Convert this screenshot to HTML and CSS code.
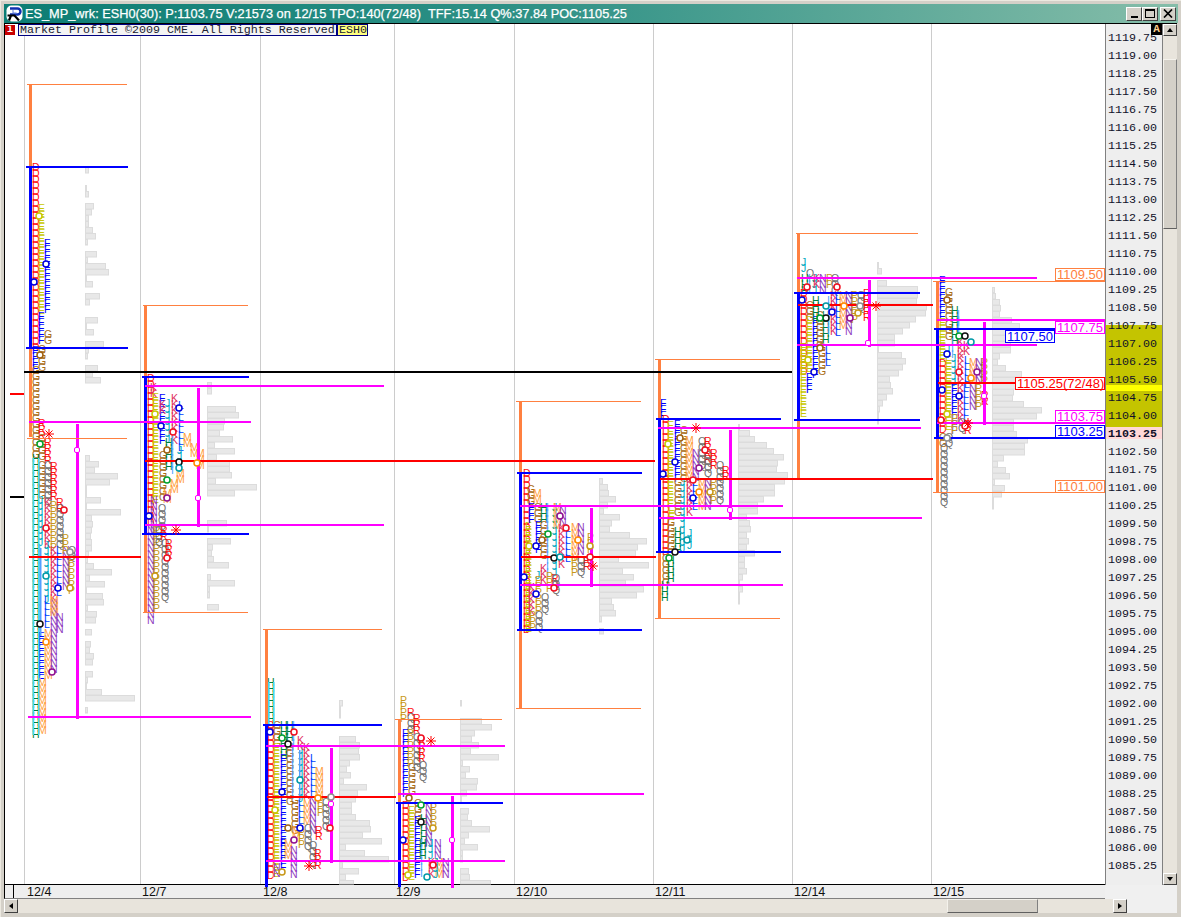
FILE: index.html
```html
<!DOCTYPE html>
<html lang="en">
<head>
<meta charset="utf-8">
<title>ES_MP_wrk</title>
<link rel="stylesheet" href="styles.css">
</head>
<body>
<div class="window">
  <header class="titlebar">
    <svg class="logo" viewBox="0 0 17 17" aria-hidden="true">
      <rect x="0.5" y="0.5" width="16" height="16" rx="5" fill="#fff"/>
      <path d="M4 3.5h7.5a3 3 0 0 1 0 6H4" fill="none" stroke="#1030b0" stroke-width="2.4"/>
      <path d="M7 5v3h3.6" fill="none" stroke="#6080e0" stroke-width="1"/>
      <path d="M1.5 10.5h7l4.500 5M5 10.500l-2 5" fill="none" stroke="#000" stroke-width="2.200"/>
    </svg>
    <span class="title">ES_MP_wrk: ESH0(30): P:1103.75 V:21573 on 12/15 TPO:140(72/48) &nbsp;TFF:15.14 Q%:37.84 POC:1105.25</span>
    <div class="controls">
      <button class="ctl ctl-min" aria-label="Minimize"><span class="min-bar"></span></button>
      <button class="ctl ctl-max" aria-label="Maximize"><span class="max-box"></span></button>
      <button class="ctl ctl-close" aria-label="Close">
        <svg viewBox="0 0 10 9" class="x-glyph" aria-hidden="true"><path d="M1 0.500l8 8M9 0.500l-8 8" stroke="#000" stroke-width="1.700" fill="none"/></svg>
      </button>
    </div>
  </header>

  <main class="client">
    <section class="plot">
      <svg id="chart" class="chart" viewBox="5 24 1100 860" width="1100" height="860"></svg>
      <div class="infobar">
        <span class="info-i">i</span>
        <span class="info-text">Market Profile ©2009 CME. All Rights Reserved</span>
        <span class="info-sym">ESH0</span>
      </div>
    </section>

    <aside class="axis">
      <span class="band band-va"></span>
      <span class="band band-last"></span>
      <span class="band band-cur"></span>
      <span class="axis-a">A</span>
      <ol class="prices">
        <li>1119.75</li><li>1119.00</li><li>1118.25</li><li>1117.50</li><li>1116.75</li><li>1116.00</li>
        <li>1115.25</li><li>1114.50</li><li>1113.75</li><li>1113.00</li><li>1112.25</li><li>1111.50</li>
        <li>1110.75</li><li>1110.00</li><li>1109.25</li><li>1108.50</li><li>1107.75</li><li>1107.00</li>
        <li>1106.25</li><li>1105.50</li><li>1104.75</li><li>1104.00</li><li class="cur">1103.25</li><li>1102.50</li>
        <li>1101.75</li><li>1101.00</li><li>1100.25</li><li>1099.50</li><li>1098.75</li><li>1098.00</li>
        <li>1097.25</li><li>1096.50</li><li>1095.75</li><li>1095.00</li><li>1094.25</li><li>1093.50</li>
        <li>1092.75</li><li>1092.00</li><li>1091.25</li><li>1090.50</li><li>1089.75</li><li>1089.00</li>
        <li>1088.25</li><li>1087.50</li><li>1086.75</li><li>1086.00</li><li>1085.25</li>
      </ol>
    </aside>

    <div class="vscroll">
      <span class="sbtn arrow-up"></span>
      <span class="vgap-top"></span>
      <span class="thumb thumb-v"></span>
      <span class="vgap-bottom"></span>
      <span class="sbtn arrow-down"></span>
    </div>

    <nav class="time-axis">
      <span class="tick"></span>
      <span>12/4</span><span>12/7</span><span>12/8</span><span>12/9</span>
      <span>12/10</span><span>12/11</span><span>12/14</span><span>12/15</span>
    </nav>

    <div class="hscroll">
      <span class="sbtn arrow-left"></span>
      <span class="hgap-left"></span>
      <span class="thumb thumb-h"></span>
      <span class="hgap-right"></span>
      <span class="sbtn arrow-right"></span>
    </div>
  </main>
</div>
<script src="chart.js"></script>
</body>
</html>
```
FILE: styles.css
```css
* { box-sizing: border-box; }
html, body { margin: 0; padding: 0; background: #d4d0c8; }
.window {
  width: 1181px;
  height: 917px;
  background: #d4d0c8;
  padding-top: 3px;
  overflow: hidden;
  border-top: 1px solid #ece9e0;
  border-left: 1px solid #ece9e0;
}
.titlebar {
  height: 19px;
  margin: 0 3px;
  display: flex;
  align-items: center;
  background: linear-gradient(90deg, #0c7d74 0%, #2f9186 45%, #85bda9 100%);
  color: #fff;
  font: 12.75px/18px "Liberation Sans", Arial, sans-serif;
  -webkit-text-stroke: 0.25px #fff;
  white-space: pre;
}
.logo { width: 17px; height: 17px; margin: 0 2px 0 2px; flex: none; }
.title { flex: 1; overflow: hidden; }
.controls { display: flex; align-items: center; margin-right: 2px; }
.ctl {
  width: 16px; height: 14px; padding: 0;
  background: #d4d0c8;
  border: 1px solid;
  border-color: #fff #404040 #404040 #fff;
  display: flex; align-items: center; justify-content: center;
  position: relative;
}
.ctl-close { margin-left: 2px; }
.min-bar { width: 7px; height: 2px; background: #000; margin-top: 6px; }
.max-box { width: 10px; height: 9px; border: 1px solid #000; border-top-width: 2px; }
.x-glyph { width: 10px; height: 9px; }

.client {
  margin: 0;
  border-top: 1px solid #000;
  margin-left: 3px;
  display: grid;
  grid-template-columns: 1101px 22px 36px 14px;
  grid-template-rows: 861px 14px 14px;
  width: 1173px;
  background: #f0f0f0;
}
.plot {
  grid-column: 1; grid-row: 1;
  position: relative;
  background: #fff;
  border-left: 1px solid #000;
  border-bottom: 1px solid #000;
}
.chart { display: block; overflow: visible; position: relative; z-index: 2; }
.chart .tpo { font: 10.5px "Liberation Sans", Arial, sans-serif; }
.chart .lbl { font: 13px "Liberation Sans", Arial, sans-serif; }

.infobar {
  position: absolute; left: 0; top: 0; z-index: 3;
  display: flex; align-items: flex-start;
  font: 11.67px/11px "Liberation Mono", "Courier New", monospace;
  color: #202030;
}
.info-i {
  width: 10px; height: 10px; margin: 1px 3px 0 0;
  background: #c80000; color: #fff; text-align: center; font-weight: bold; font-size: 10px; line-height: 10px;
}
.info-text, .info-sym { height: 12px; border: 1px solid #000080; padding: 0 1px; line-height: 11px; white-space: pre; }
.info-text { background: #f4f4f4; width: 319px; }
.info-sym { background: #ffff80; width: 31px; }

.axis {
  grid-column: 2 / 4; grid-row: 1;
  position: relative;
  background: #eeeeee;
  border-left: 1px solid #808080;
  border-right: 1px solid #808080;
  overflow: hidden;
}
.band { position: absolute; left: 0; right: 0; }
.band-va { top: 301px; height: 102px; background: #c4c400; }
.band-last { top: 361px; height: 6px; background: #ffff00; }
.band-cur { top: 403px; height: 12px; background: #ffd8d8; }
.axis-a {
  position: absolute; right: 0; top: 0; width: 11px; height: 11px; z-index: 2;
  background: #000; color: #ffd090;
  font: bold 11px/11px "Liberation Mono", monospace; text-align: center;
}
.prices {
  position: relative; z-index: 1;
  list-style: none; margin: 0; padding: 5px 0 0 2px;
  font: 11.67px/18px "Liberation Mono", "Courier New", monospace;
  color: #101028;
}
.prices .cur { font-weight: bold; }

.vscroll {
  grid-column: 4; grid-row: 1;
  display: flex; flex-direction: column;
  background: #e8e4dc;
}
.vgap-top { height: 23px; flex: none; }
.vgap-bottom { flex: 1; }
.thumb { flex: none; background: #d4d0c8; border: 1px solid; border-color: #f4f2ec #808080 #606060 #f4f2ec; }
.thumb-v { height: 170px; }
.thumb-h { width: 91px; }
.sbtn {
  flex: none; width: 14px; height: 12px;
  background: #d4d0c8;
  border: 1px solid; border-color: #fff #404040 #404040 #fff;
  display: flex; align-items: center; justify-content: center;
}
.sbtn::after { content: ""; width: 0; height: 0; border: 3px solid transparent; }
.arrow-up::after { border-bottom: 4px solid #000; border-top: 0; }
.arrow-down::after { border-top: 4px solid #000; border-bottom: 0; }
.arrow-left::after { border-right: 4px solid #000; border-left: 0; }
.arrow-right::after { border-left: 4px solid #000; border-right: 0; }

.time-axis {
  grid-column: 1; grid-row: 2;
  display: flex;
  background: #eeeeee;
  border-left: 1px solid #000;
  border-bottom: 1px solid #808080;
  padding-left: 8px;
  font: 12.5px/14px "Liberation Sans", Arial, sans-serif;
  color: #101010;
}
.time-axis .tick { width: 14px; border-left: 1px solid #000; flex: none; }
.time-axis span:nth-child(2) { width: 115px; }
.time-axis span:nth-child(3) { width: 121px; }
.time-axis span:nth-child(4) { width: 133px; }
.time-axis span:nth-child(5) { width: 120px; }
.time-axis span:nth-child(6) { width: 139px; }
.time-axis span:nth-child(7) { width: 139px; }
.time-axis span:nth-child(8) { width: 139px; }

.hscroll {
  grid-column: 1 / 3; grid-row: 3;
  display: flex;
  background: #e8e4dc;
}
.hscroll .sbtn { height: 14px; }
.hgap-left { width: 929px; flex: none; }
.hgap-right { flex: 1; }
```
FILE: chart.js
```js
(function () {
  var NS = "http://www.w3.org/2000/svg";
  var svg = document.getElementById("chart");
  function el(tag, attrs, text) {
    var e = document.createElementNS(NS, tag);
    for (var k in attrs) e.setAttribute(k, attrs[k]);
    if (text) e.textContent = text;
    svg.appendChild(e);
    return e;
  }
  var ORANGE = "#ff8040", BLUE = "#0000ff", MAG = "#ff00ff", RED = "#ff0000";
  var COLORS = {
    D: "#ff1010", E: "#c8c800", F: "#0000ff", G: "#a86c18", H: "#008040",
    I: "#50a0ff", J: "#00a8c0", K: "#e03060", L: "#0040ff", M: "#ffa040",
    N: "#9040c0", P: "#c89818", Q: "#707070", R: "#ff1010"
  };

  // Day separators
  [24, 140, 260, 394, 514, 653, 792, 931].forEach(function (x) {
    el("rect", { x: x, y: 24, width: 1, height: 860, fill: "#cccccc" });
  });

  // Volume histograms: [x, first row y, widths per 6px row]
  var HIST = [
    [85, 167, [3,0,0,1,3,0,8,6,3,3,7,10,2,0,11,2,20,23,1,7,0,14,4,0,0,12,1,8,0,18,3,2,0,12,7,15,0,0,0,0,0,0,0,0,0,0,0,0,4,13,9,32,24,1,1,15,1,35,6,7,6,5,6,6,3,2,8,26,4,19,1,17,18,2,11,10,0,6,0,5,4,8,7,0,7,2,1,16,49,0,2]],
    [207, 382, [4,4,0,0,28,31,17,16,12,25,7,27,9,22,22,24,8,49,27,0,0,0,0,19,1,0,23,5,4,6,21,0,3,27,2,2,0,11]],
    [339, 700, [3,1,1,0,0,0,16,20,19,20,10,7,11,4,27,18,16,12,12,16,30,31,23,42,6,25,49,3,19,6,14]],
    [460, 700, [1,0,0,21,31,14,11,18,10,38,2,9,5,17,16,6,1,0,8,7,11,29,8,4,17,2,2,0,8,9,30,23]],
    [599, 478, [3,8,9,16,8,4,20,12,10,30,47,38,36,19,49,23,34,26,44,37,12,14,16,2,0,4]],
    [738, 424, [1,11,16,28,35,45,39,38,49,46,36,36,25,19,19,8,11,12,8,10,8,16,6,6,8,4,1,4,1,1]],
    [877, 262, [1,4,0,9,40,40,39,49,48,38,32,25,17,17,1,24,28,25,21,12,13,15,9,5,2,1,1]],
    [992, 287, [2,3,7,8,7,19,27,19,28,18,18,7,5,13,29,26,30,21,20,31,49,44,21,21,24,35,32,32,11,5,13,17,2,12,9,1,1]]
  ];
  HIST.forEach(function (h) {
    h[2].forEach(function (w, i) {
      var y = h[1] + i * 6;
      if (!w || y >= 883) return;
      el("rect", { x: h[0] + 0.5, y: y + 0.5, width: w, height: Math.min(5.5, 883.5 - y), fill: "#e8e8e8", stroke: "#dcdcdc" });
    });
  });

  // Letter columns: [x, letter, yTop, yBottom]
  var COLS = [
    // 12/4
    [32,"D",167,348],[38,"E",208,315],[44,"F",243,313],[38,"F",316,345],[44,"G",334,345],
    [32,"F",350,368],[38,"G",349,370],[32,"G",370,456],[38,"R",423,438],[38,"G",438,458],
    [32,"H",458,735],[38,"G",465,500],[38,"J",500,545],[38,"I",548,636],[38,"F",636,682],[38,"M",682,730],
    [44,"R",442,465],[44,"Q",465,502],[44,"K",502,545],[44,"J",545,600],[44,"L",600,625],[44,"M",633,680],
    [50,"R",466,497],[50,"P",505,548],[50,"K",550,603],[50,"N",603,672],[56,"R",502,510],[56,"Q",508,548],
    [56,"L",550,593],[62,"N",550,590],[62,"P",538,550],[68,"Q",550,556],[68,"P",560,590],[50,"M",600,615],[56,"N",617,630],
    // 12/7
    [147,"D",378,525],[150,"K",387,397],[152,"E",397,500],[159,"F",398,445],[159,"G",455,497],[165,"J",403,442],
    [171,"K",398,445],[178,"L",405,452],[183,"M",437,447],[190,"M",447,453],[196,"M",453,467],[176,"M",473,483],
    [170,"M",483,493],[163,"M",493,500],[165,"H",442,470],[159,"K",404,410],[150,"N",500,530],[147,"N",530,620],
    [153,"P",530,612],[158,"Q",508,530],[155,"Q",530,545],[160,"R",530,540],[161,"Q",543,597],[165,"R",543,557],[171,"I",440,470],[177,"J",450,468],
    // 12/8
    [267,"H",682,725],[267,"D",725,880],[273,"G",725,745],[273,"E",747,880],[280,"H",725,757],[280,"F",758,843],
    [286,"G",747,805],[291,"G",800,830],[291,"I",747,800],[298,"J",750,800],[297,"K",740,746],[303,"K",747,800],
    [310,"L",758,797],[315,"M",771,797],[303,"M",803,823],[309,"N",800,830],[317,"P",800,817],[322,"Q",802,830],
    [298,"L",802,823],[292,"M",830,840],[315,"R",830,836],[280,"F",843,870],[284,"M",843,860],[290,"N",850,880],
    [273,"N",867,880],[309,"Q",845,866],[314,"R",853,866],[298,"P",832,848],[304,"Q",828,848],[286,"H",725,742],[292,"I",725,745],
    // 12/9
    [400,"P",700,718],[407,"R",712,717],[407,"Q",717,733],[413,"R",718,735],[402,"F",733,793],[407,"P",733,767],
    [408,"G",767,793],[413,"Q",737,767],[418,"R",740,758],[419,"Q",765,777],[402,"D",805,880],[408,"E",810,880],
    [414,"G",803,820],[414,"F",820,880],[420,"H",818,843],[420,"I",843,880],[419,"H",843,855],[425,"N",807,843],
    [430,"P",807,830],[428,"J",843,855],[434,"N",843,855],[428,"K",862,880],[435,"M",862,880],[442,"N",862,880],[433,"J",862,880],
    // 12/10
    [523,"D",473,630],[527,"G",489,503],[533,"M",493,503],[525,"E",526,630],[528,"F",507,524],[534,"G",507,523],
    [535,"F",525,550],[540,"H",507,523],[540,"G",525,555],[546,"I",507,557],[552,"J",507,555],[553,"M",507,525],[559,"N",510,525],
    [558,"K",528,565],[565,"L",528,563],[571,"M",527,560],[577,"N",527,553],[587,"P",537,550],[583,"R",560,566],
    [535,"J",575,580],[540,"K",568,580],[546,"I",560,572],[552,"J",560,572],[571,"P",560,575],[577,"Q",560,572],
    [528,"K",587,613],[535,"P",580,610],[541,"Q",597,613],[529,"P",615,627],[535,"Q",615,627],[551,"R",578,584],[546,"P",576,590],[552,"Q",578,590],
    // 12/11
    [660,"F",403,418],[662,"D",419,552],[667,"E",425,508],[674,"F",424,478],[680,"G",430,478],[685,"M",440,478],
    [692,"N",453,478],[698,"Q",441,470],[704,"R",441,460],[704,"Q",455,478],[710,"R",453,470],[716,"Q",465,478],[722,"R",470,478],
    [674,"G",482,516],[680,"J",482,516],[686,"K",482,516],[692,"L",482,510],[698,"M",482,510],[704,"N",482,510],[710,"P",482,504],[716,"Q",482,504],
    [667,"G",522,552],[674,"H",531,550],[680,"J",518,550],[687,"J",533,547],[662,"G",558,585],[661,"H",585,601],[667,"H",560,583],[668,"E",510,520],
    // 12/14
    [801,"J",262,272],[806,"Q",273,278],[801,"H",278,292],[808,"I",278,292],[812,"J",278,292],[813,"K",278,287],[819,"N",278,292],[826,"P",278,287],[831,"Q",278,292],
    [800,"D",293,376],[806,"G",305,320],[806,"E",320,370],[812,"F",320,378],[816,"G",315,345],[822,"H",315,340],[827,"I",300,330],
    [830,"K",295,332],[835,"L",296,332],[839,"M",295,325],[845,"N",295,332],[851,"P",295,320],[857,"Q",295,310],[863,"R",293,320],
    [800,"E",347,417],[806,"F",377,392],[818,"G",347,373],[825,"L",350,362],[812,"H",300,320],
    // 12/15
    [939,"F",280,318],[945,"G",292,318],[951,"H",310,320],[957,"I",314,320],[939,"E",322,362],[945,"G",324,338],[951,"H",322,342],[957,"I",322,338],[963,"K",345,354],[945,"J",348,356],[951,"I",342,356],[957,"K",342,356],
    [939,"D",363,433],[945,"E",360,430],[951,"J",358,385],[957,"K",358,385],[964,"L",360,385],[969,"M",362,385],[975,"N",362,385],[981,"P",362,380],
    [951,"F",388,430],[957,"K",388,420],[963,"L",388,420],[969,"N",388,410],[975,"P",388,410],[981,"R",395,405],
    [951,"P",418,430],[958,"Q",422,432],[964,"R",424,432],[939,"G",437,445],[945,"Q",437,448],[940,"Q",448,505]
  ];
  COLS.forEach(function (c) {
    for (var y = c[2]; y <= c[3]; y += 6) {
      if (y > 878) break;
      el("text", { class: "tpo", x: c[0], y: y + 4, fill: COLORS[c[1]] }, c[1]);
    }
  });
  // Cyan and light-blue rails over the H and I columns
  [[32.5, 458, 735, "#40d8f0"], [38, 458, 735, "#40d8f0"], [40, 548, 636, "#50a0ff"], [268, 682, 725, "#40d8f0"], [273, 682, 725, "#40d8f0"], [299, 750, 800, "#50a0ff"]].forEach(function (r) {
    el("rect", { x: r[0], y: r[1], width: 1.5, height: r[2] - r[1], fill: r[3] });
  });

  // Vertical bars: [x, width, y1, y2, colour]
  var BARS = [
    [29,3,84,437,ORANGE],[144,3,305,612,ORANGE],[265,3,629,885,ORANGE],[398,3,719,803,ORANGE],
    [519,3,401,708,ORANGE],[658,3,359,618,ORANGE],[797,3,233,479,ORANGE],[936,3,281,492,ORANGE],
    [29,3,167,348,BLUE],[144,3,377,534,BLUE],[265,3,725,887,BLUE],[398,3,803,887,BLUE],
    [519,3,473,630,BLUE],[658,3,419,552,BLUE],[797,3,293,420,BLUE],[936,3,329,438,BLUE],
    [76,3,424,719,MAG],[197,3,388,527,MAG],[330,3,748,863,MAG],[451,3,796,888,MAG],
    [590,3,508,587,MAG],[729,3,430,520,MAG],[868,3,280,347,MAG],[983,3,322,425,MAG]
  ];
  BARS.forEach(function (b) {
    el("rect", { x: b[0], y: b[2], width: b[1], height: b[3] - b[2], fill: b[4] });
  });

  // Horizontal levels: [x1, x2, y, thickness, colour]
  var LINES = [
    [27,127,84,1,ORANGE],[27,127,438,1,ORANGE],[143,248,305,1,ORANGE],[143,248,612,1,ORANGE],
    [263,382,629,1,ORANGE],[395,502,719,1,ORANGE],[516,641,401,1,ORANGE],[516,641,708,1,ORANGE],
    [655,780,359,1,ORANGE],[655,780,618,1,ORANGE],[796,918,233,1,ORANGE],[933,1105,281,1,ORANGE],[933,1105,492,1,ORANGE],
    [26,128,167,2,BLUE],[26,128,348,2,BLUE],[142,249,377,2,BLUE],[142,249,534,2,BLUE],
    [263,382,725,2,BLUE],[396,503,803,2,BLUE],[517,642,473,2,BLUE],[517,642,630,2,BLUE],
    [656,781,419,2,BLUE],[656,781,552,2,BLUE],[794,920,293,2,BLUE],[794,920,420,2,BLUE],
    [934,1055,329,2,BLUE],[934,1105,438,2,BLUE],
    [29,251,422,2,MAG],[28,251,717,2,MAG],[145,384,386,2,MAG],[145,251,422,2,MAG],[145,384,525,2,MAG],
    [266,505,746,2,MAG],[266,505,861,2,MAG],[398,644,794,2,MAG],[398,505,861,2,MAG],
    [520,783,506,2,MAG],[520,783,585,2,MAG],[658,921,428,2,MAG],[659,922,518,2,MAG],
    [797,1037,278,2,MAG],[797,1037,345,2,MAG],[937,1105,320,2,MAG],[937,1105,423,2,MAG],
    [29,141,557,2,RED],[145,655,461,2,RED],[267,396,797,2,RED],[521,656,557,2,RED],
    [660,933,479,2,RED],[798,933,305,2,RED],[938,1020,383,2,RED],[10,24,394,2,RED],
    [24,792,372,2,"#000000"],[10,24,497,2,"#000000"]
  ];
  LINES.forEach(function (l) {
    el("rect", { x: l[0], y: l[3] === 1 ? l[2] : l[2] - 1, width: l[1] - l[0], height: l[3], fill: l[4] });
  });

  // Open/close rings: [x, y, colour]
  var R="#f01020", B="#0000e0", O="#c8c800", K="#101010", T="#009aa8", V="#901090", N="#a06010", A="#ff8800", S="#909090", Y="#c89818", W="#00a030";
  var RINGS = [
    [34,282,B],[39,216,O],[46,264,B],[40,355,N],[40,444,W],[64,510,R],[46,528,R],[46,576,T],[58,588,B],[70,588,Y],[40,624,K],[46,642,A],[52,672,V],[70,552,S],
    [155,414,O],[161,426,B],[179,408,B],[173,432,R],[167,450,N],[179,462,K],[179,468,T],[197,463,A],[167,480,W],[167,498,V],[149,516,B],[155,576,Y],[167,558,R],
    [270,732,B],[294,732,R],[282,738,W],[288,744,K],[300,780,T],[282,792,B],[275,810,O],[318,798,A],[300,828,B],[330,828,R],[288,828,N],[294,840,V],[282,872,Y],[331,797,S],
    [421,738,R],[409,798,N],[421,805,W],[421,822,K],[433,828,Y],[403,840,B],[433,865,R],[408,875,O],[427,877,T],
    [524,577,B],[529,546,O],[536,546,B],[542,540,N],[548,534,W],[554,558,K],[560,557,T],[560,516,V],[566,528,R],[578,540,A],[536,594,B],[554,588,R],[590,546,Y],[590,557,R],
    [668,444,O],[680,438,N],[705,450,R],[675,462,B],[699,468,V],[663,474,B],[693,480,R],[693,498,B],[699,492,A],[710,492,Y],[687,540,T],[675,552,K],[669,558,W],
    [807,287,R],[837,287,R],[802,300,B],[826,318,K],[826,306,T],[844,306,A],[832,312,B],[820,318,W],[850,318,V],[808,360,O],[814,372,B],[820,348,N],[860,306,S],[858,313,Y],
    [947,300,N],[959,336,W],[965,336,K],[971,342,T],[947,354,B],[959,372,R],[977,372,V],[971,378,A],[942,390,B],[959,396,B],[947,414,O],[941,420,R],[965,426,R],[947,438,S]
  ];
  RINGS.forEach(function (r) {
    el("circle", { cx: r[0], cy: r[1], r: 3, fill: "#fff", stroke: r[2], "stroke-width": 1.5 });
  });

  // Value-area midpoints
  [[77,450],[198,498],[331,804],[452,840],[730,510],[868,343],[984,396]].forEach(function (p) {
    el("rect", { x: p[0] - 2.5, y: p[1] - 2.5, width: 5, height: 5, rx: 1.5, fill: "#fff", stroke: MAG });
  });

  // Red asterisks
  [[49,434],[176,530],[309,866],[431,741],[593,566],[696,428],[876,306],[968,423]].forEach(function (p) {
    el("path", {
      d: "M" + (p[0]-5) + " " + p[1] + "h10M" + p[0] + " " + (p[1]-5) + "v10M" + (p[0]-3.5) + " " + (p[1]-3.5) + "l7 7M" + (p[0]+3.5) + " " + (p[1]-3.5) + "l-7 7",
      stroke: RED, "stroke-width": 1, fill: "none"
    });
  });

  // Price tags: [x, y, width, text, colour]
  [
    [1055,268,49,"1109.50",ORANGE],[1055,321,49,"1107.75",MAG],[1005,330,49,"1107.50",BLUE],
    [1015,377,89,"1105.25(72/48)",RED],[1055,410,49,"1103.75",MAG],[1055,425,49,"1103.25",BLUE],[1055,480,49,"1101.00",ORANGE]
  ].forEach(function (t) {
    el("rect", { x: t[0] + 0.5, y: t[1] + 0.5, width: t[2], height: 12, fill: "#fff", stroke: t[4] });
    el("text", { class: "lbl", x: t[0] + 2, y: t[1] + 11, fill: t[4] }, t[3]);
  });
})();
```
